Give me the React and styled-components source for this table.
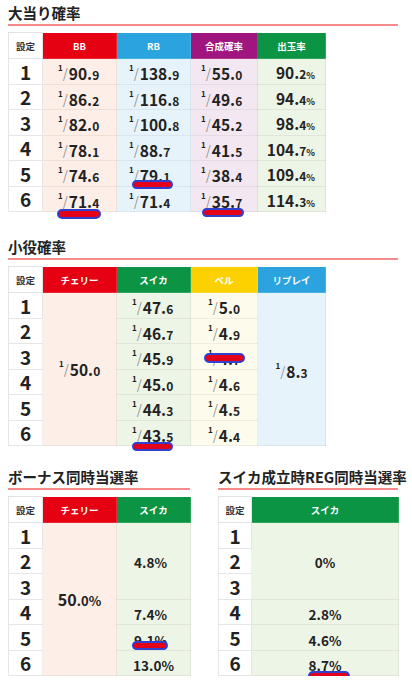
import React from "react";
import styled, { createGlobalStyle } from "styled-components";

const GlobalStyle = createGlobalStyle`
  body {
    margin: 0;
    background: #fff;
    font-family: "Noto Sans CJK JP", "Noto Sans", sans-serif;
    color: #222;
  }
`;

const HEAD = {
  red: "#e50012",
  blue: "#2aa3df",
  purple: "#a1157f",
  green: "#0b9444",
  yellow: "#fdd000",
};

const BODY = {
  red: "#fdeee7",
  blue: "#e7f3fb",
  purple: "#f3e8f2",
  green: "#edf5e7",
  yellow: "#fdfbec",
};

const Page = styled.div`
  position: relative;
  width: 412px;
  box-sizing: border-box;
  padding: 3px 14px 0 8px;
`;

const Section = styled.section`
  margin-top: ${(p) => p.$gap || 0}px;
`;

const Title = styled.h2`
  margin: 0 0 6px;
  font-size: 14.5px;
  line-height: 20px;
  font-weight: 700;
  color: #222;
  padding-bottom: 1px;
  border-bottom: 2px solid #f58b8b;
  white-space: nowrap;
`;

const Pair = styled.div`
  display: grid;
  grid-template-columns: 182px 180px;
  column-gap: 28px;
`;

const Table = styled.table`
  border-collapse: collapse;
  table-layout: fixed;
  width: ${(p) => p.$w}px;
  border: 1px solid #e3e3e3;
`;

const Th = styled.th`
  height: 25px;
  padding: 0;
  background: ${(p) => (p.$c ? HEAD[p.$c] : "#fff")};
  color: ${(p) => (p.$c ? "#fff" : "#333")};
  font-size: 9.5px;
  font-weight: 700;
  text-align: center;
  border: 1px solid ${(p) => (p.$c ? "rgba(255,255,255,0.15)" : "#e3e3e3")};
`;

const Tr = styled.tr`
  height: 25.5px;
`;

const Num = styled.td`
  padding: 0;
  background: #fff;
  font-size: 19px;
  font-weight: 700;
  text-align: center;
  line-height: 1;
  border: 1px solid #e6e6e6;
`;

const Td = styled.td`
  padding: ${(p) => p.$pt || 0}px ${(p) => p.$pr || 0}px 0
    ${(p) => p.$pl || 0}px;
  background: ${(p) => BODY[p.$c]};
  text-align: ${(p) => p.$align || "center"};
  vertical-align: middle;
  line-height: 1;
  white-space: nowrap;
  border: 1px solid rgba(0, 0, 0, 0.055);
`;

const FracWrap = styled.span`
  display: inline-block;
  font-weight: 700;
  color: #222;
`;

const One = styled.span`
  font-size: 8px;
  vertical-align: 9px;
`;

const Slash = styled.span`
  font-family: "DejaVu Sans", sans-serif;
  font-size: 15px;
  font-weight: 300;
  color: #888;
  margin-right: 1px;
`;

const Int = styled.span`
  font-size: ${(p) => p.$s || 15.5}px;
`;

const Dec = styled.span`
  font-size: ${(p) => p.$s || 12}px;
`;

const PctSign = styled.span`
  font-size: ${(p) => p.$s || 9}px;
`;

const Mark = styled.div`
  position: absolute;
  left: ${(p) => p.$x}px;
  top: ${(p) => p.$y}px;
  width: ${(p) => p.$w}px;
  height: ${(p) => p.$h}px;
  box-sizing: border-box;
  background: #e5001a;
  border: 2.5px solid #3040cf;
  border-radius: 5px;
`;

function Frac({ v }) {
  const [i, d] = v.split(".");
  return (
    <FracWrap>
      <One>1</One>
      <Slash>/</Slash>
      <Int>{i}.</Int>
      <Dec>{d}</Dec>
    </FracWrap>
  );
}

function Payout({ v }) {
  const [i, d] = v.split(".");
  return (
    <FracWrap>
      <Int>{i}.</Int>
      <Dec>{d}</Dec>
      <PctSign>%</PctSign>
    </FracWrap>
  );
}

function Pct({ v, big }) {
  if (big) {
    const [i, d] = v.split(".");
    return (
      <FracWrap>
        <Int $s={16}>{i}</Int>
        <Dec $s={13}>.{d}%</Dec>
      </FracWrap>
    );
  }
  return (
    <FracWrap>
      <Int $s={13.5}>{v}</Int>
      <PctSign $s={13}>%</PctSign>
    </FracWrap>
  );
}

const SETTEI = [1, 2, 3, 4, 5, 6];

const bigHit = [
  ["90.9", "138.9", "55.0", "90.2"],
  ["86.2", "116.8", "49.6", "94.4"],
  ["82.0", "100.8", "45.2", "98.4"],
  ["78.1", "88.7", "41.5", "104.7"],
  ["74.6", "79.1", "38.4", "109.4"],
  ["71.4", "71.4", "35.7", "114.3"],
];

const suika = ["47.6", "46.7", "45.9", "45.0", "44.3", "43.5"];
const bell = ["5.0", "4.9", "4.7", "4.6", "4.5", "4.4"];

function Cols({ widths }) {
  return (
    <colgroup>
      {widths.map((w, i) => (
        <col key={i} style={{ width: w }} />
      ))}
    </colgroup>
  );
}

export default function App() {
  return (
    <Page>
      <GlobalStyle />

      <Section>
        <Title>大当り確率</Title>
        <Table $w={317}>
          <Cols widths={[34, 74, 74, 67, 68]} />
          <thead>
            <tr>
              <Th>設定</Th>
              <Th $c="red">BB</Th>
              <Th $c="blue">RB</Th>
              <Th $c="purple">合成確率</Th>
              <Th $c="green">出玉率</Th>
            </tr>
          </thead>
          <tbody>
            {bigHit.map((r, i) => (
              <Tr key={i}>
                <Num>{SETTEI[i]}</Num>
                <Td $c="red" $align="left" $pl={15} $pt={5}>
                  <Frac v={r[0]} />
                </Td>
                <Td $c="blue" $align="left" $pl={12} $pt={5}>
                  <Frac v={r[1]} />
                </Td>
                <Td $c="purple" $align="left" $pl={10} $pt={5}>
                  <Frac v={r[2]} />
                </Td>
                <Td $c="green" $align="right" $pr={10} $pt={2}>
                  <Payout v={r[3]} />
                </Td>
              </Tr>
            ))}
          </tbody>
        </Table>
      </Section>

      <Section $gap={25}>
        <Title>小役確率</Title>
        <Table $w={317}>
          <Cols widths={[34, 74, 74, 67, 68]} />
          <thead>
            <tr>
              <Th>設定</Th>
              <Th $c="red">チェリー</Th>
              <Th $c="green">スイカ</Th>
              <Th $c="yellow">ベル</Th>
              <Th $c="blue">リプレイ</Th>
            </tr>
          </thead>
          <tbody>
            {SETTEI.map((s, i) => (
              <Tr key={s}>
                <Num>{s}</Num>
                {i === 0 && (
                  <Td $c="red" rowSpan={6} $align="left" $pl={16}>
                    <Frac v="50.0" />
                  </Td>
                )}
                <Td $c="green" $align="left" $pl={15} $pt={5}>
                  <Frac v={suika[i]} />
                </Td>
                <Td $c="yellow" $align="left" $pl={17} $pt={5}>
                  <Frac v={bell[i]} />
                </Td>
                {i === 0 && (
                  <Td $c="blue" rowSpan={6} $pt={4}>
                    <Frac v="8.3" />
                  </Td>
                )}
              </Tr>
            ))}
          </tbody>
        </Table>
      </Section>

      <Section $gap={21}>
        <Pair>
          <div>
            <Title>ボーナス同時当選率</Title>
            <Table $w={182}>
              <Cols widths={[34, 74, 74]} />
              <thead>
                <tr>
                  <Th>設定</Th>
                  <Th $c="red">チェリー</Th>
                  <Th $c="green">スイカ</Th>
                </tr>
              </thead>
              <tbody>
                {SETTEI.map((s, i) => (
                  <Tr key={s}>
                    <Num>{s}</Num>
                    {i === 0 && (
                      <Td $c="red" rowSpan={6}>
                        <Pct v="50.0" big />
                      </Td>
                    )}
                    {i === 0 && (
                      <Td $c="green" rowSpan={3} $pr={6}>
                        <Pct v="4.8" />
                      </Td>
                    )}
                    {i === 3 && (
                      <Td $c="green" $pr={6} $pt={3}>
                        <Pct v="7.4" />
                      </Td>
                    )}
                    {i === 4 && (
                      <Td $c="green" $pr={6} $pt={3}>
                        <Pct v="9.1" />
                      </Td>
                    )}
                    {i === 5 && (
                      <Td $c="green" $pt={3}>
                        <Pct v="13.0" />
                      </Td>
                    )}
                  </Tr>
                ))}
              </tbody>
            </Table>
          </div>

          <div>
            <Title>スイカ成立時REG同時当選率</Title>
            <Table $w={180}>
              <Cols widths={[33, 147]} />
              <thead>
                <tr>
                  <Th>設定</Th>
                  <Th $c="green">スイカ</Th>
                </tr>
              </thead>
              <tbody>
                {SETTEI.map((s, i) => (
                  <Tr key={s}>
                    <Num>{s}</Num>
                    {i === 0 && (
                      <Td $c="green" rowSpan={3}>
                        <Pct v="0" />
                      </Td>
                    )}
                    {i >= 3 && (
                      <Td $c="green" $pt={3}>
                        <Pct v={["2.8", "4.6", "8.7"][i - 3]} />
                      </Td>
                    )}
                  </Tr>
                ))}
              </tbody>
            </Table>
          </div>
        </Pair>
      </Section>

      <Mark $x={132} $y={180} $w={41} $h={9} />
      <Mark $x={57} $y={209} $w={44} $h={10} />
      <Mark $x={202} $y={208} $w={42} $h={9} />
      <Mark $x={204} $y={353} $w={41} $h={10} />
      <Mark $x={132} $y={442} $w={41} $h={9} />
      <Mark $x={132} $y={641} $w={36} $h={9} />
      <Mark $x={308} $y={671} $w={42} $h={10} />
    </Page>
  );
}
